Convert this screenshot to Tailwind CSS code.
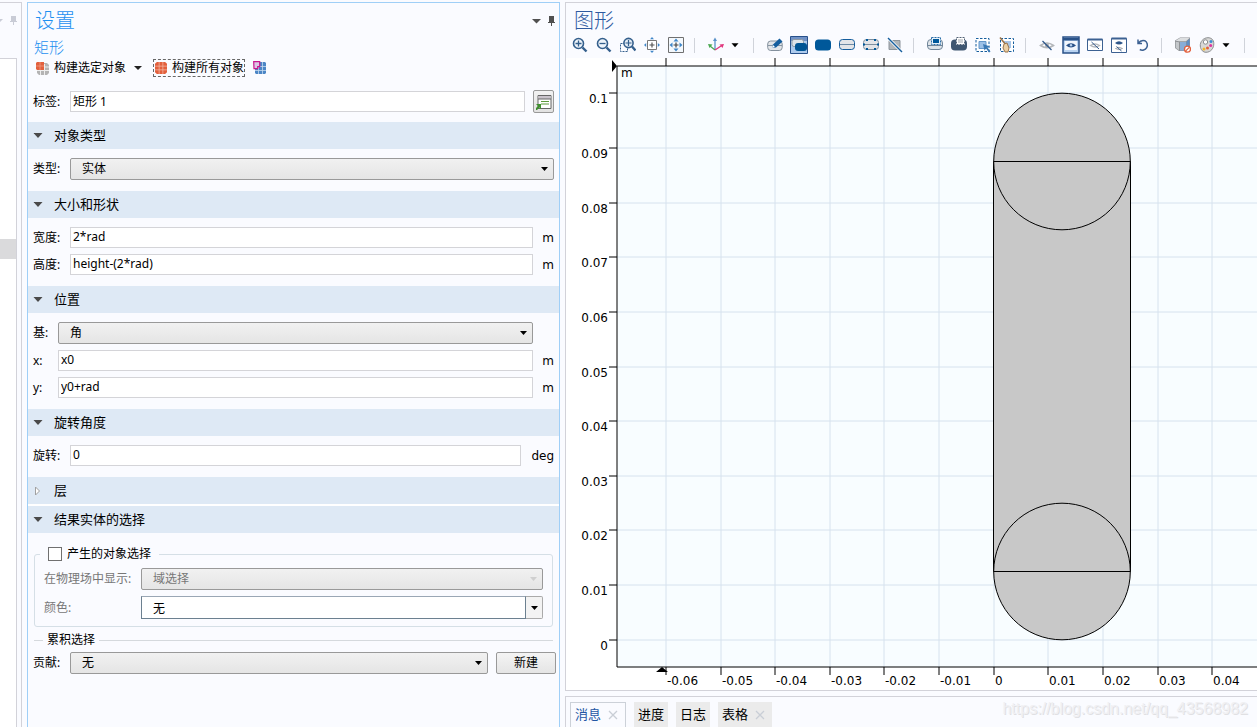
<!DOCTYPE html>
<html lang="zh-CN">
<head>
<meta charset="utf-8">
<title>设置 - 矩形</title>
<script src="https://cdn.jsdelivr.net/npm/@tailwindcss/browser@4"></script>
</head>
<body class="flex h-screen gap-[5px] overflow-hidden bg-[#fafbff] pt-[2px] font-['Noto_Sans','Noto_Sans_CJK_SC',sans-serif] text-xs text-black">

<!-- edge of the model tree -->
<aside class="flex w-[22px] shrink-0 flex-col border-t border-r border-[#d2d2d9]">
  <div class="flex h-[55px] items-start pt-[12px]">
    <svg class="h-[12px] w-[18px]" viewBox="0 0 18 12" fill="#c9ccd6"><path d="M0 4h3L0 7zM11 1h5v5h1v1h-3v3h-1V7h-3V6h1z"/></svg>
  </div>
  <div class="mr-[4px] flex-1 border-t border-r border-[#d2d2d9] bg-white pt-[180px]">
    <div class="h-5 bg-[#dadadc]"></div>
  </div>
</aside>

<!-- settings -->
<main class="w-[533px] shrink-0 border border-b-0 border-[#9fcff7]">
  <div class="flex h-9 items-center pr-[3px] pl-[7px]">
    <h1 class="flex-1 text-xl font-light text-[#1e90f0]">设置</h1>
    <button aria-label="菜单" class="mr-[6px]"><svg class="h-[5px] w-[9px]" viewBox="0 0 9 5" fill="#505050"><path d="M0 0h9L4.500 4.500z"/></svg></button>
    <button aria-label="固定"><svg class="h-[10px] w-[9px]" viewBox="0 0 9 10" fill="#505050"><path d="M2 0h5v6h1v1H5v3H4V7H1V6h1z"/></svg></button>
  </div>
  <h2 class="h-4 pl-[6px] text-[15px] leading-4 font-light text-[#1e90f0]">矩形</h2>
  <div class="flex h-[26px] items-center pl-2">
    <button class="flex items-center gap-[5px]">
      <svg class="size-[13px]" viewBox="0 0 13 13"><path d="M3 1h8l2 2v8l-2 2H3l-2-2V3z" fill="#b4b4b4"/><path d="M4.500 2v11M8.500 2v11M1 8.500h12M8 5h5" stroke="#eee" fill="none"/><path d="M1 0h7v8H1L0 7V1z" fill="#e2603d"/><path d="M4 0v8M0 4h8" stroke="#f0a08a" fill="none" stroke-width=".7"/></svg>
      <span>构建选定对象</span>
    </button>
    <button aria-label="构建选项" class="mx-[8px]"><svg class="h-[4px] w-[8px]" viewBox="0 0 8 4"><path d="M0 0h8L4 4z" fill="#222"/></svg></button>
    <button class="ml-[3px] flex h-[18px] items-center gap-[5px] border border-dashed border-[#666] pl-px">
      <svg class="size-[12px]" viewBox="0 0 13 13"><path d="M2 0h9l2 2v9l-2 2H2l-2-2V2z" fill="#e2603d"/><path d="M4.500 0v13M8.500 0v13M0 4.500h13M0 8.500h13" stroke="#f6b9a6" fill="none" stroke-width=".8"/></svg>
      <span>构建所有对象</span>
    </button>
    <button aria-label="构建并预览" class="ml-2"><svg class="size-[14px]" viewBox="0 0 14 14"><path d="M3 1h9l1 1v10l-1 1H3l-1-1V2z" fill="#4c86c6"/><path d="M5.500 1v12M9.500 1v12M2 5.500h11M2 9.500h11" stroke="#c5daf0" fill="none" stroke-width=".8"/><path d="M.7.700h6v5h-2v2H1z" fill="#dcc7e6" stroke="#c9188f" stroke-width="1.200"/></svg></button>
  </div>

  <div class="my-[9px] flex h-[23px] items-center pr-[5px] pl-[5px]">
    <label for="tag" class="w-[37px] shrink-0">标签:</label>
    <input id="tag" value="矩形 1" class="h-[21px] min-w-0 flex-1 border border-[#d4d4d8] bg-white px-[2px] pb-[2px]">
    <button aria-label="编辑说明" class="ml-2 flex h-[23px] w-[21px] items-center justify-center rounded-xs border border-[#999] bg-linear-to-b from-[#f2f2f2] to-[#e2e2e2]">
      <svg class="h-[16px] w-[16px]" viewBox="0 0 16 16"><path d="M2 1.500h13v13H2z" fill="#fff" stroke="#666"/><path d="M2.500 2h12v3h-12z" fill="#c9c3cb"/><path d="M2 5h13" stroke="#666"/><path d="M5 7.500h8M5 10h8" stroke="#5c9a3c"/><path d="M0 10h5v5L3.500 13.500 1 16H0v-2l2-2z" fill="#3f8f2f"/></svg>
    </button>
  </div>

  <section>
    <button aria-expanded="true" class="flex h-[27px] w-full items-center gap-[11px] bg-[#dee9f5] pl-[5px] text-[13px]"><svg class="h-[5px] w-[10px]" viewBox="0 0 10 5"><path d="M.5 0h9L5 5z" fill="#4a4a4a"/></svg>对象类型</button>
    <div class="flex items-center px-[5px] pt-[9px] pb-[11px]">
      <label for="type" class="w-[37px] shrink-0">类型:</label>
      <div class="relative min-w-0 flex-1">
        <select id="type" class="block h-[22px] w-full appearance-none rounded-xs border border-[#999] bg-linear-to-b from-[#f1f1f1] to-[#e5e5e5] px-[11px] pb-px"><option>实体</option></select>
        <svg class="pointer-events-none absolute top-[9px] right-[6px] h-[4px] w-[7px]" viewBox="0 0 7 4"><path d="M0 0h7L3.500 4z"/></svg>
      </div>
    </div>
  </section>

  <section>
    <button aria-expanded="true" class="flex h-[27px] w-full items-center gap-[11px] bg-[#dee9f5] pl-[5px] text-[13px]"><svg class="h-[5px] w-[10px]" viewBox="0 0 10 5"><path d="M.5 0h9L5 5z" fill="#4a4a4a"/></svg>大小和形状</button>
    <div class="flex flex-col gap-[6px] px-[5px] pt-[9px] pb-[11px]">
      <div class="flex items-center">
        <label for="w" class="w-[37px] shrink-0">宽度:</label>
        <input id="w" value="2*rad" class="h-[21px] min-w-0 flex-1 border border-[#d4d4d8] bg-white px-[2px] pb-[2px]">
        <span class="w-[21px] text-right font-['DejaVu_Sans',sans-serif]">m</span>
      </div>
      <div class="flex items-center">
        <label for="h" class="w-[37px] shrink-0">高度:</label>
        <input id="h" value="height-(2*rad)" class="h-[21px] min-w-0 flex-1 border border-[#d4d4d8] bg-white px-[2px] pb-[2px]">
        <span class="w-[21px] text-right font-['DejaVu_Sans',sans-serif]">m</span>
      </div>
    </div>
  </section>

  <section>
    <button aria-expanded="true" class="flex h-[27px] w-full items-center gap-[11px] bg-[#dee9f5] pl-[5px] text-[13px]"><svg class="h-[5px] w-[10px]" viewBox="0 0 10 5"><path d="M.5 0h9L5 5z" fill="#4a4a4a"/></svg>位置</button>
    <div class="flex flex-col gap-[6px] px-[5px] pt-[9px] pb-[11px]">
      <div class="flex items-center pr-[21px]">
        <label for="base" class="w-[25px] shrink-0">基:</label>
        <div class="relative min-w-0 flex-1">
          <select id="base" class="block h-[22px] w-full appearance-none rounded-xs border border-[#999] bg-linear-to-b from-[#f1f1f1] to-[#e5e5e5] px-[11px] pb-px"><option>角</option></select>
          <svg class="pointer-events-none absolute top-[9px] right-[6px] h-[4px] w-[7px]" viewBox="0 0 7 4"><path d="M0 0h7L3.500 4z"/></svg>
        </div>
      </div>
      <div class="flex items-center">
        <label for="x" class="w-[25px] shrink-0">x:</label>
        <input id="x" value="x0" class="h-[21px] min-w-0 flex-1 border border-[#d4d4d8] bg-white px-[2px] pb-[2px]">
        <span class="w-[21px] text-right font-['DejaVu_Sans',sans-serif]">m</span>
      </div>
      <div class="flex items-center">
        <label for="y" class="w-[25px] shrink-0">y:</label>
        <input id="y" value="y0+rad" class="h-[21px] min-w-0 flex-1 border border-[#d4d4d8] bg-white px-[2px] pb-[2px]">
        <span class="w-[21px] text-right font-['DejaVu_Sans',sans-serif]">m</span>
      </div>
    </div>
  </section>

  <section>
    <button aria-expanded="true" class="flex h-[27px] w-full items-center gap-[11px] bg-[#dee9f5] pl-[5px] text-[13px]"><svg class="h-[5px] w-[10px]" viewBox="0 0 10 5"><path d="M.5 0h9L5 5z" fill="#4a4a4a"/></svg>旋转角度</button>
    <div class="flex items-center px-[5px] pt-[9px] pb-[11px]">
      <label for="rot" class="w-[37px] shrink-0">旋转:</label>
      <input id="rot" value="0" class="h-[21px] min-w-0 flex-1 border border-[#d4d4d8] bg-white px-[2px] pb-[2px]">
      <span class="w-[33px] text-right font-['DejaVu_Sans',sans-serif]">deg</span>
    </div>
  </section>

  <section class="border-b-2 border-white">
    <button aria-expanded="false" class="flex h-[27px] w-full items-center gap-[11px] bg-[#dee9f5] pl-[5px] text-[13px]"><svg class="h-[10px] w-[10px]" viewBox="0 0 10 10"><path d="M2.500 1v8l4-4z" fill="#fff" stroke="#a0a0a0"/></svg>层</button>
  </section>

  <section>
    <button aria-expanded="true" class="flex h-[27px] w-full items-center gap-[11px] bg-[#dee9f5] pl-[5px] text-[13px]"><svg class="h-[5px] w-[10px]" viewBox="0 0 10 5"><path d="M.5 0h9L5 5z" fill="#4a4a4a"/></svg>结果实体的选择</button>
    <fieldset class="mx-[6px] mt-[13px] rounded-[3px] border border-[#d5dfe6] px-[5px] pb-[7px]">
      <legend class="px-2">
        <label class="flex h-4 items-center gap-[5px] leading-4"><input type="checkbox" class="size-[14px] appearance-none border border-[#707070] bg-white">产生的对象选择</label>
      </legend>
      <div class="flex flex-col gap-[6px] pt-[6px] pr-[4px] pl-[4px] text-[#777]">
        <div class="flex items-center">
          <label for="phys" class="w-[97px] shrink-0">在物理场中显示:</label>
          <div class="relative min-w-0 flex-1">
            <select id="phys" disabled class="block h-[22px] w-full appearance-none rounded-xs border border-[#999] bg-linear-to-b from-[#f1f1f1] to-[#e5e5e5] px-[11px] pb-px text-[#777] opacity-100"><option>域选择</option></select>
            <svg class="pointer-events-none absolute top-[9px] right-[6px] h-[4px] w-[7px]" viewBox="0 0 7 4"><path d="M0 0h7L3.500 4z" fill="#cfcfcf"/></svg>
          </div>
        </div>
        <div class="flex items-center">
          <label for="color" class="w-[97px] shrink-0">颜色:</label>
          <input id="color" value="无" class="h-[23px] min-w-0 flex-1 border border-[#6c8090] border-t-[#9aa7b5] bg-white px-[11px] text-black">
          <button aria-label="选择颜色" class="flex h-[23px] w-[17px] items-center justify-center rounded-r-xs border border-l-0 border-[#aaa] bg-[#f3f3f3]"><svg class="h-[4px] w-[7px]" viewBox="0 0 7 4"><path d="M0 0h7L3.500 4z"/></svg></button>
        </div>
      </div>
    </fieldset>
    <div class="mx-[6px] mt-[5px] flex h-4 items-center gap-[4px]">
      <span class="h-px w-[9px] bg-[#d5d9dd]"></span><h3 class="leading-4">累积选择</h3><span class="h-px flex-1 bg-[#d5d9dd]"></span>
    </div>
    <div class="mt-[4px] flex items-center pr-[3px] pl-[5px]">
      <label for="contrib" class="w-[37px] shrink-0">贡献:</label>
      <div class="relative min-w-0 flex-1">
        <select id="contrib" class="block h-[22px] w-full appearance-none rounded-xs border border-[#999] bg-linear-to-b from-[#f1f1f1] to-[#e5e5e5] px-[11px] pb-px"><option>无</option></select>
        <svg class="pointer-events-none absolute top-[9px] right-[6px] h-[4px] w-[7px]" viewBox="0 0 7 4"><path d="M0 0h7L3.500 4z"/></svg>
      </div>
      <button class="ml-2 h-[22px] w-[60px] rounded-xs border border-[#999] bg-linear-to-b from-[#f4f4f4] to-[#e5e5e5] leading-5">新建</button>
    </div>
  </section>
</main>

<!-- graphics and messages -->
<div class="flex min-w-0 flex-1 flex-col gap-[5px]">
  <section class="flex min-h-0 flex-1 flex-col border-y border-l border-[#d2d2d9]">
    <h1 class="h-[29px] shrink-0 pt-[4px] pl-2 text-xl font-light text-[#2f5a9f]">图形</h1>
    <div role="toolbar" class="flex h-[26px] shrink-0 items-center overflow-hidden pl-[2px] *:shrink-0 [&>button]:flex [&>button]:h-6 [&>button]:w-6 [&>button]:items-center [&>button]:justify-center [&>i]:h-[15px] [&>i]:w-[10px] [&>i]:ml-[6px] [&>i]:border-l [&>i]:border-[#d0d3da] [&_svg]:size-4">
      <button aria-label="放大"><svg viewBox="0 0 16 16" fill="none" stroke="#345f8c"><circle cx="6.500" cy="6.500" r="5" stroke-width="1.600" fill="#eef4fa"/><path d="M10.500 10.500l4 4" stroke-width="2.400"/><path d="M3.500 6.500h6M6.500 3.500v6" stroke-width="1.300"/></svg></button>
      <button aria-label="缩小"><svg viewBox="0 0 16 16" fill="none" stroke="#345f8c"><circle cx="6.500" cy="6.500" r="5" stroke-width="1.600" fill="#eef4fa"/><path d="M10.500 10.500l4 4" stroke-width="2.400"/><path d="M3.500 6.500h6" stroke-width="1.300"/></svg></button>
      <button aria-label="框选缩放"><svg viewBox="0 0 16 16" fill="none" stroke="#345f8c"><path d="M.5 6.500h7v8h-7z" stroke-dasharray="2 1"/><circle cx="8.500" cy="6" r="4.600" stroke-width="1.600" fill="#e4edf6"/><path d="M12 9.500l3.500 4" stroke-width="2.400"/><path d="M5.500 6h6M8.500 3v6" stroke-width="1.200"/></svg></button>
      <button aria-label="缩放到选定"><svg viewBox="0 0 16 16"><path d="M3.500 3.500h9v9h-9z" fill="#fff" stroke="#777"/><path d="M5.500 8h5M8 5.500v5" stroke="#555" stroke-width="1.200"/><path d="M6 2.200L8 0l2 2.200zM6 13.800L8 16l2-2.200zM2.200 6L0 8l2.200 2zM13.800 6L16 8l-2.200 2z" fill="#3f86c8"/></svg></button>
      <button aria-label="缩放到窗口大小"><svg viewBox="0 0 16 16"><path d="M.5.500h15v15H.500z" fill="#f4f8fc" stroke="#707070"/><path d="M5.500 8h5M8 5.500v5" stroke="#444" stroke-width="1.200"/><path d="M5.500 4.500L8 1.500l2.500 3zM5.500 11.500l2.500 3 2.500-3zM4.500 5.500L1.500 8l3 2.500zM11.500 5.500l3 2.500-3 2.500z" fill="#3f86c8"/></svg></button>
      <i></i>
      <button aria-label="转到默认视图"><svg viewBox="0 0 16 16" fill="none"><path d="M7 13V2" stroke="#5a93c9" stroke-width="1.300"/><path d="M7 .5L5 4h4z" fill="#5a93c9"/><path d="M7 13L2 9" stroke="#4aa851" stroke-width="1.300"/><path d="M0 7l4.500.5-3 3.500z" fill="#4aa851"/><path d="M7 13l6-4" stroke="#e0357c" stroke-width="1.300"/><path d="M16 7l-4.500.5 3 3.500z" fill="#e0357c"/></svg></button>
      <button aria-label="视图选项" class="-mr-[5px] pr-[10px]"><svg viewBox="0 0 16 16"><path d="M4 6h8l-4 4.500z"/></svg></button>
      <i></i>
      <button aria-label="绘制"><svg viewBox="0 0 16 16"><rect x=".7" y="4" width="14.500" height="9.500" rx="3" fill="#e3e5e8" stroke="#83909d"/><path d="M1 8.500h14" stroke="#8695a3"/><path d="M5 11l1-3.500 6.500-6 3 3L9 10.500z" fill="#155d9d"/><path d="M5 11l1-3 2 2z" fill="#fff"/></svg></button>
      <button aria-label="选择对象" aria-pressed="true"><svg viewBox="0 0 18 18" class="!size-[18px]"><path d="M.5.500h17v17H.500z" fill="#aecbed" stroke="#27508a"/><path d="M1 1h16v4H1z" fill="#6f91c5"/><rect x="2" y="3.500" width="11.500" height="7" rx="2" fill="#dde3e9" stroke="#8d99a4"/><rect x="5" y="7" width="12" height="8" rx="3" fill="#005494"/></svg></button>
      <button aria-label="选择域"><svg viewBox="0 0 16 16"><rect y="2.500" width="16" height="11" rx="3.500" fill="#00589a"/></svg></button>
      <button aria-label="选择边界"><svg viewBox="0 0 16 16"><rect x=".5" y="2.500" width="15" height="10" rx="3" fill="#e3e5e8" stroke="#155d9d"/><path d="M1 7.500h14" stroke="#6f8ba5"/></svg></button>
      <button aria-label="选择点"><svg viewBox="0 0 16 16"><rect x=".5" y="2.500" width="15" height="10" rx="3" fill="#e3e5e8" stroke="#7d8f9f"/><path d="M1 7.500h14" stroke="#7d8f9f"/><path d="M3 2h2v2H3zM11 2h2v2h-2zM0 6.500h2v2H0zM14 6.500h2v2h-2zM3 11h2v2H3zM11 11h2v2h-2z" fill="#00589a"/></svg></button>
      <button aria-label="取消选择"><svg viewBox="0 0 16 16"><path d="M2 3.500h11v9H2z" fill="#b2b5b9" stroke="#8c949c"/><path d="M1 1l14 14" stroke="#fff" stroke-width="3"/><path d="M1 1l14 14" stroke="#155d9d" stroke-width="1.400"/></svg></button>
      <i></i>
      <button aria-label="框选"><svg viewBox="0 0 16 16"><rect x=".5" y="2.500" width="15" height="10" rx="3.500" fill="#dfe4e9" stroke="#71869a"/><path d="M1 8.500h14" stroke="#71869a"/><path d="M4 0h10v8H4z" fill="#e8f1f9"/><path d="M6 2h6v4H6z" fill="#00589a"/><path d="M4.500.5h9v7h-9z" fill="none" stroke="#2d6fa8" stroke-dasharray="2 1"/></svg></button>
      <button aria-label="框选所有"><svg viewBox="0 0 16 16"><rect y="2.500" width="16" height="11" rx="4" fill="#3f5670"/><path d="M5 0h9v8H5z" fill="#fff"/><path d="M7 2h5v4H7z" fill="#cfd2d5"/><path d="M5.500.5h8v7h-8z" fill="none" stroke="#526276" stroke-dasharray="2 1"/></svg></button>
      <button aria-label="选择框"><svg viewBox="0 0 16 16"><path d="M1 1.500h13v13H1z" fill="#fff" stroke="#155d9d" stroke-dasharray="2.500 1.500"/><path d="M4 4.500h7v7H4z" fill="#9cc0e6" stroke="#6396c9"/><path d="M8 7l7 2.500-2.500 1 3 4-1.500 1-3-4-1.500 2z" fill="#3978b4"/></svg></button>
      <button aria-label="取消选择框"><svg viewBox="0 0 16 16"><path d="M1.500 1.500h13v13h-13z" fill="#fff" stroke="#155d9d" stroke-dasharray="2.500 1.500"/><path d="M5 4h7v7H5z" fill="#a8c6e8"/><path d="M1 .5L7 8" stroke="#9a744a" stroke-width="1.600"/><path d="M5 7l3-1 2 5-1 4H6L4 11z" fill="#ead0a6" stroke="#9a744a"/></svg></button>
      <i></i>
      <button aria-label="隐藏"><svg viewBox="0 0 16 16" fill="none"><path d="M1.500 8.500Q8 3.500 14.500 8.500 8 13 1.500 8.500z" stroke="#b4b7bb" stroke-width="1.600"/><circle cx="8" cy="8.500" r="2" fill="#a5a8ad"/><path d="M3.500 4l9 9" stroke="#2e568a" stroke-width="1.200"/></svg></button>
      <button aria-label="显示" aria-pressed="true"><svg viewBox="0 0 18 18" class="!size-[18px]"><path d="M1 1h16v16H1z" fill="#b9d3f1" stroke="#2a5288" stroke-width="1.500"/><path d="M3 5h12v9H3z" fill="#f3f7fc"/><path d="M1 2h16v2.500H1z" fill="#2a5288"/><path d="M4 9.500Q9 5 14 9.500 9 13.500 4 9.500z" fill="#2a5288"/><circle cx="9" cy="9.300" r="1.200" fill="#b9d3f1"/></svg></button>
      <button aria-label="仅显示隐藏"><svg viewBox="0 0 16 16" fill="none"><path d="M.5 2.500h15v11H.500z" fill="#fff" stroke="#3c6192"/><path d="M.5 2.500h15" stroke="#3c6192" stroke-width="2"/><path d="M3.500 8.500Q8 5.500 12.500 8.500 8 11.500 3.500 8.500z" stroke="#b4b7bb" stroke-width="1.400"/><path d="M4.500 5l7.500 7" stroke="#2e568a"/></svg></button>
      <button aria-label="全部显示"><svg viewBox="0 0 16 16" fill="none"><path d="M.5 1.500h15v14H.500z" fill="#fff" stroke="#3c6192"/><path d="M.5 1.500h15" stroke="#3c6192" stroke-width="2"/><path d="M4 6Q8 2.500 12 6 8 9 4 6z" fill="#2e568a"/><path d="M4.500 11.500Q8 9 11.500 11.500 8 14 4.500 11.500z" stroke="#a5a8ad"/><path d="M5.500 9.500l5 4.500" stroke="#2e568a"/></svg></button>
      <button aria-label="重置隐藏"><svg viewBox="0 0 16 16" fill="none" stroke="#3c6192" stroke-width="1.500"><path d="M3 2.500v4h4M3.200 6.300Q6 2.500 9.800 3.700a4.700 4.700 0 0 1-5 8.800"/></svg></button>
      <i></i>
      <button aria-label="透明"><svg viewBox="0 0 16 16"><path d="M0 3.500L5 .5h10v10l-4 3.500H4L0 11z" fill="#8f9296"/><path d="M.5 3.800L5 1h9.500L11 4.200H4z" fill="#dcdee0"/><path d="M.7 4.800L4 5.200v8L.7 10.700z" fill="#c4c7ca"/><path d="M5 5h6v8.500H5z" fill="#87add8"/><path d="M11.500 4.500L14.500 2v8.500l-3 2.500z" fill="#5f8fc6"/><circle cx="12.500" cy="12.200" r="3" fill="#fff" stroke="#e2603d" stroke-width="1.300"/><path d="M10.500 14.200l4-4" stroke="#e2603d" stroke-width="1.200"/></svg></button>
      <button aria-label="颜色主题"><svg viewBox="0 0 16 16"><path d="M9 .7C4 .7 1 5 1.300 9c.2 4 3 6.300 5.700 6.300 5 0 7.800-4.300 7.800-8.600C14.800 2.500 12 .7 9 .7z" fill="#d8d8d6" stroke="#8b8d90"/><circle cx="6.500" cy="5" r="2.200" fill="#fff" stroke="#8b8d90"/><circle cx="12" cy="4.500" r="1.500" fill="#3c8ed0"/><circle cx="11.700" cy="8.500" r="1.500" fill="#dc34a0"/><circle cx="8.500" cy="11" r="1.500" fill="#e2603d"/><circle cx="5" cy="12" r="1.500" fill="#f1b52a"/></svg></button>
      <button aria-label="主题选项" class="-mr-[5px] pr-[10px]"><svg viewBox="0 0 16 16"><path d="M4 6h8l-4 4.500z"/></svg></button>
      <i></i>
    </div>
    <div class="min-h-0 flex-1 overflow-hidden bg-white">
      <svg id="plot" class="block h-full w-full font-['DejaVu_Sans',sans-serif] text-xs" role="img" aria-label="几何图形">
        <rect x="51" y="8" width="100%" height="601" fill="#f8fdff"/>
        <g id="grid" stroke="#d6e2ee"></g>
        <g id="ticks" stroke="#000"></g>
        <path d="M51 8V609M51 8H4000M51 609H4000" stroke="#000"/>
        <path d="M46 2v12l5-6zM90 614l6-5 6 5z"/>
        <g stroke="#000">
          <path d="M427.500 103.500h137v410h-137z" fill="#c8c8c8"/>
          <circle cx="496" cy="103.500" r="68.300" fill="#c8c8c8"/>
          <circle cx="496" cy="513.500" r="68.300" fill="#c8c8c8"/>
          <path d="M427.500 103.500h137M427.500 513.500h137"/>
        </g>
        <g id="labels"><text x="55" y="19">m</text></g>
      </svg>
    </div>
  </section>

  <section class="relative flex h-[31px] shrink-0 items-end gap-2 border-t border-l border-[#d2d2d9] pl-[4px] text-[13px]">
    <button class="flex h-[25px] items-center gap-[7px] border border-b-0 border-[#ccd1d8] px-[4px] text-[#2456a4]">消息<svg class="mr-[3px] size-[10px]" viewBox="0 0 10 10"><path d="M1 1l8 8M9 1L1 9" stroke="#c9ced6" stroke-width="1.300"/></svg></button>
    <button class="h-[25px] bg-[#ebebeb] px-[4px]">进度</button>
    <button class="h-[25px] bg-[#ebebeb] px-[4px]">日志</button>
    <button class="flex h-[25px] items-center gap-[7px] bg-[#ebebeb] px-[4px]">表格<svg class="mr-[3px] size-[10px]" viewBox="0 0 10 10"><path d="M1 1l8 8M9 1L1 9" stroke="#c9ced6" stroke-width="1.300"/></svg></button>
    <span class="absolute top-0 right-[9px] font-['Liberation_Sans',sans-serif] text-base text-[#f0f0f3] text-shadow-[1px_1px_0px_#e0e0e3]">https://blog.csdn.net/qq_43568982</span>
  </section>
</div>

<script>
const xs = [100,155,209,264,318,373,428,482,537,592,646];
const xl = ['-0.06','-0.05','-0.04','-0.03','-0.02','-0.01','0','0.01','0.02','0.03','0.04'];
const ys = [35,90,145,199,254,309,363,418,472,527,582];
const yl = ['0.1','0.09','0.08','0.07','0.06','0.05','0.04','0.03','0.02','0.01','0'];
const ns = 'http://www.w3.org/2000/svg';
const add = (id, tag, attrs, text) => {
  const e = document.createElementNS(ns, tag);
  for (const k in attrs) e.setAttribute(k, attrs[k]);
  if (text) e.textContent = text;
  document.getElementById(id).append(e);
};
xs.forEach((x, i) => {
  add('grid', 'path', {d: `M${x} 8V609`});
  add('ticks', 'path', {d: `M${x} 0V8M${x} 609V617`});
  add('labels', 'text', {x: x + 1, y: 627}, xl[i]);
});
ys.forEach((y, i) => {
  add('grid', 'path', {d: `M51 ${y}H4000`});
  add('ticks', 'path', {d: `M43 ${y}H51`});
  add('labels', 'text', {x: 42, y: y + 10, 'text-anchor': 'end'}, yl[i]);
});
</script>
</body>
</html>
